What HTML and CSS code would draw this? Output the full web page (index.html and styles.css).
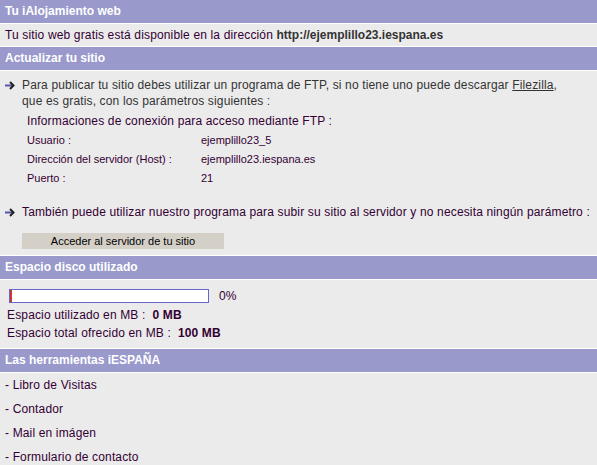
FILE: index.html
```html
<!DOCTYPE html>
<html lang="es">
<head>
<meta charset="utf-8">
<title>Tu iAlojamiento web</title>
<link rel="stylesheet" href="styles.css">
</head>
<body>
<div class="page">
  <div class="hdr">Tu iAlojamiento web</div>
  <div class="box box1">Tu sitio web gratis está disponible en la dirección <b class="url">http://ejemplillo23.iespana.es</b></div>

  <div class="hdr">Actualizar tu sitio</div>
  <div class="box box2">
    <div class="bullet">
      <svg class="arrow" width="10" height="9" viewBox="0 0 10 9"><path d="M0 4.5H7" stroke="#5555aa" stroke-width="2"/><path d="M5 1L8.5 4.5L5 8" fill="none" stroke="#222" stroke-width="2"/></svg>
      <div class="gray">Para publicar tu sitio debes utilizar un programa de FTP, si no tiene uno puede descargar <u>Filezilla</u>,<br>que es gratis, con los parámetros siguientes :</div>
    </div>
    <div class="info">Informaciones de conexión para acceso mediante FTP :</div>
    <div class="grid">
      <div class="lbl">Usuario :</div><div>ejemplillo23_5</div>
      <div class="lbl">Dirección del servidor (Host) :</div><div>ejemplillo23.iespana.es</div>
      <div class="lbl">Puerto :</div><div>21</div>
    </div>
    <div class="bullet bullet2">
      <svg class="arrow" width="10" height="9" viewBox="0 0 10 9"><path d="M0 4.5H7" stroke="#5555aa" stroke-width="2"/><path d="M5 1L8.5 4.5L5 8" fill="none" stroke="#222" stroke-width="2"/></svg>
      <div>También puede utilizar nuestro programa para subir su sitio al servidor y no necesita ningún parámetro :</div>
    </div>
    <div class="btn">Acceder al servidor de tu sitio</div>
  </div>

  <div class="hdr">Espacio disco utilizado</div>
  <div class="box box3">
    <div class="barrow">
      <div class="bar"><div class="fill"></div></div>
      <span class="pct">0%</span>
    </div>
    <div class="line">Espacio utilizado en MB : &nbsp;<b>0 MB</b></div>
    <div class="line">Espacio total ofrecido en MB : &nbsp;<b>100 MB</b></div>
  </div>

  <div class="hdr">Las herramientas iESPAÑA</div>
  <div class="box box4">
    <div class="item">- Libro de Visitas</div>
    <div class="item">- Contador</div>
    <div class="item">- Mail en imágen</div>
    <div class="item">- Formulario de contacto</div>
  </div>
</div>
</body>
</html>
```
FILE: styles.css
```css
html, body {
  margin: 0;
  padding: 0;
  background: #ffffff;
}
body {
  font-family: "Liberation Sans", Arial, sans-serif;
  font-size: 12px;
  color: #330033;
  letter-spacing: 0.15px;
}
.page {
  display: flex;
  flex-direction: column;
  gap: 1px;
  background: #ffffff;
}
.hdr {
  background: #9999cc;
  color: #ffffff;
  font-weight: bold;
  height: 23px;
  line-height: 23px;
  padding-left: 5px;
  letter-spacing: 0;
}
.box {
  background: #ebebeb;
}
.box1 {
  height: 22px;
  line-height: 22px;
  padding-left: 5px;
}
.url {
  color: #333333;
  letter-spacing: 0;
}
.box2 {
  height: 184px;
  box-sizing: border-box;
  padding: 6px 0 0 5px;
}
.bullet {
  display: flex;
  align-items: flex-start;
  line-height: 16px;
}
.arrow {
  margin-top: 4px;
  width: 10px;
  flex: none;
  margin-right: 7px;
}
.gray {
  color: #333333;
}
.info {
  margin: 4px 0 0 22px;
  line-height: 16px;
}
.grid {
  display: grid;
  grid-template-columns: 174px auto;
  grid-auto-rows: 19px;
  align-items: center;
  margin-left: 22px;
  padding-top: 1px;
  font-size: 11px;
  letter-spacing: 0;
}
.bullet2 {
  margin-top: 17px;
}
.btn {
  margin: 13px 0 0 17px;
  width: 202px;
  height: 16px;
  line-height: 16px;
  background: #d4d0c8;
  color: #000000;
  text-align: center;
  font-size: 11px;
  letter-spacing: 0;
}
.box3 {
  height: 68px;
  box-sizing: border-box;
  padding: 9px 0 0 7px;
}
.barrow {
  display: flex;
  align-items: center;
  height: 14px;
  margin-left: 2px;
}
.bar {
  width: 200px;
  height: 14px;
  box-sizing: border-box;
  border: 1px solid #6666cc;
  background: #ffffff;
}
.fill {
  width: 2px;
  height: 100%;
  background: #cc3333;
}
.pct {
  margin-left: 10px;
}
.line {
  line-height: 18px;
}
.box3 .barrow + .line {
  margin-top: 3px;
}
.box4 {
  padding-left: 5px;
  min-height: 100px;
}
.item {
  line-height: 24px;
}
```
